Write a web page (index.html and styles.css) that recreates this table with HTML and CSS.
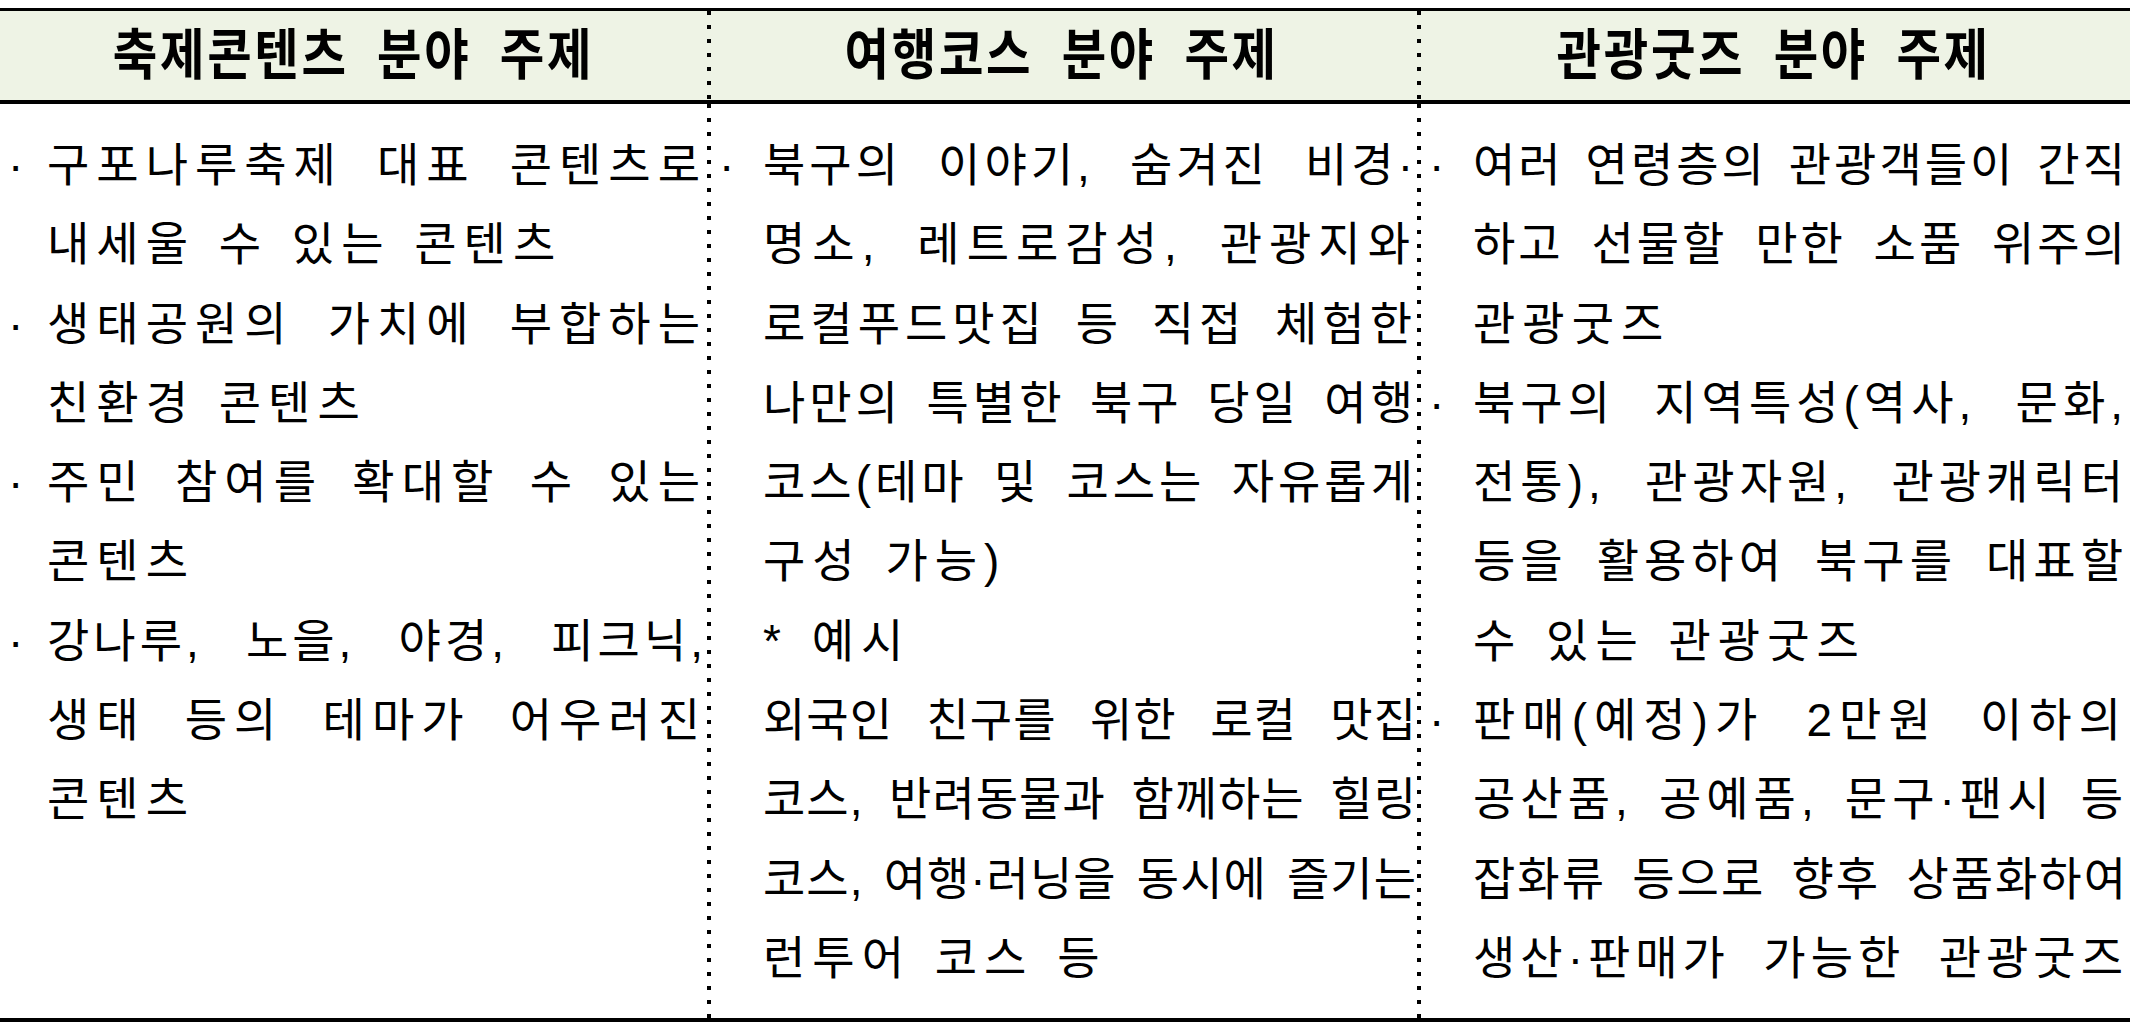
FILE: index.html
```html
<!DOCTYPE html>
<html lang="ko">
<head>
<meta charset="utf-8">
<title>분야별 주제</title>
<link rel="stylesheet" href="styles.css">
</head>
<body>
<div class="sheet">
  <div class="head">
    <div class="hcell"><span class="htext">축제콘텐츠 분야 주제</span></div>
    <div class="hcell sep"><span class="htext">여행코스 분야 주제</span></div>
    <div class="hcell sep"><span class="htext">관광굿즈 분야 주제</span></div>
  </div>
  <div class="body">
    <div class="cell first">
      <div class="item"><span class="bullet">·</span><div class="lines">
        <span class="ln j">구포나루축제 대표 콘텐츠로</span>
        <span class="ln">내세울 수 있는 콘텐츠</span>
      </div></div>
      <div class="item"><span class="bullet">·</span><div class="lines">
        <span class="ln j">생태공원의 가치에 부합하는</span>
        <span class="ln">친환경 콘텐츠</span>
      </div></div>
      <div class="item"><span class="bullet">·</span><div class="lines">
        <span class="ln j">주민 참여를 확대할 수 있는</span>
        <span class="ln">콘텐츠</span>
      </div></div>
      <div class="item"><span class="bullet">·</span><div class="lines">
        <span class="ln j s4">강나루, 노을, 야경, 피크닉,</span>
        <span class="ln j">생태 등의 테마가 어우러진</span>
        <span class="ln">콘텐츠</span>
      </div></div>
    </div>
    <div class="cell sep">
      <div class="item"><span class="bullet">·</span><div class="lines">
        <span class="ln j s4">북구의 이야기, 숨겨진 비경·</span>
        <span class="ln j">명소, 레트로감성, 관광지와</span>
        <span class="ln j s5">로컬푸드맛집 등 직접 체험한</span>
        <span class="ln j s4">나만의 특별한 북구 당일 여행</span>
        <span class="ln j s4">코스(테마 및 코스는 자유롭게</span>
        <span class="ln">구성 가능)</span>
      </div></div>
      <div class="item"><span class="bullet"></span><div class="lines">
        <span class="ln">* 예시</span>
      </div></div>
      <div class="item"><span class="bullet"></span><div class="lines">
        <span class="ln j s1">외국인 친구를 위한 로컬 맛집</span>
        <span class="ln j s1">코스, 반려동물과 함께하는 힐링</span>
        <span class="ln j s1">코스, 여행·러닝을 동시에 즐기는</span>
        <span class="ln">런투어 코스 등</span>
      </div></div>
    </div>
    <div class="cell sep last">
      <div class="item"><span class="bullet">·</span><div class="lines">
        <span class="ln j s3">여러 연령층의 관광객들이 간직</span>
        <span class="ln j s3">하고 선물할 만한 소품 위주의</span>
        <span class="ln">관광굿즈</span>
      </div></div>
      <div class="item"><span class="bullet">·</span><div class="lines">
        <span class="ln j s5">북구의 지역특성(역사, 문화,</span>
        <span class="ln j s5">전통), 관광자원, 관광캐릭터</span>
        <span class="ln j s5">등을 활용하여 북구를 대표할</span>
        <span class="ln">수 있는 관광굿즈</span>
      </div></div>
      <div class="item"><span class="bullet">·</span><div class="lines">
        <span class="ln j">판매(예정)가 2만원 이하의</span>
        <span class="ln j s5">공산품, 공예품, 문구·팬시 등</span>
        <span class="ln j s2">잡화류 등으로 향후 상품화하여</span>
        <span class="ln j s5">생산·판매가 가능한 관광굿즈</span>
      </div></div>
    </div>
  </div>
</div>
</body>
</html>
```
FILE: styles.css
```css
html, body {
  margin: 0;
  padding: 0;
  background: #ffffff;
}

body {
  font-family: "Liberation Sans", "Noto Sans CJK KR", sans-serif;
  color: #000000;
}

.sheet {
  margin-top: 8px;
  border-top: 3px solid #000;
  border-bottom: 4px solid #000;
}

.head {
  display: grid;
  grid-template-columns: 707px 710px 1fr;
  height: 89px;
  border-bottom: 4px solid #000;
  background-color: #eef3e5;
}

.hcell {
  display: flex;
  align-items: center;
  justify-content: center;
  overflow: hidden;
}

.sep {
  background-image: repeating-linear-gradient(to bottom, #000 0 4px, transparent 4px 14px);
  background-size: 4px 100%;
  background-repeat: no-repeat;
  background-position: 0 0;
}

.htext {
  display: inline-block;
  font-weight: 700;
  font-size: 55px;
  line-height: 1;
  letter-spacing: 3px;
  word-spacing: 14px;
  white-space: nowrap;
  transform: scaleX(0.88);
}

.body {
  display: grid;
  grid-template-columns: 707px 710px 1fr;
  height: 914px;
}

.cell {
  padding: 22px 0 0 12px;
  font-size: 46px;
  line-height: 79.3px;
  letter-spacing: 7px;
  word-spacing: 4px;
  overflow: hidden;
}

.cell.first {
  padding-left: 8px;
  --bw: 39px;
}

.cell.last {
  padding-right: 2px;
}

.item {
  display: grid;
  grid-template-columns: var(--bw, 44px) 1fr;
}

.bullet {
  grid-column: 1;
  letter-spacing: 0;
}

.lines {
  grid-column: 2;
  min-width: 0;
}

.ln {
  display: block;
  white-space: nowrap;
}

.j {
  text-align: justify;
  text-align-last: justify;
}

.s6 { letter-spacing: 6px; }
.s5 { letter-spacing: 5px; }
.s4 { letter-spacing: 4px; }
.s3 { letter-spacing: 3px; }
.s2 { letter-spacing: 2px; }
.s1 { letter-spacing: 1px; }
```
